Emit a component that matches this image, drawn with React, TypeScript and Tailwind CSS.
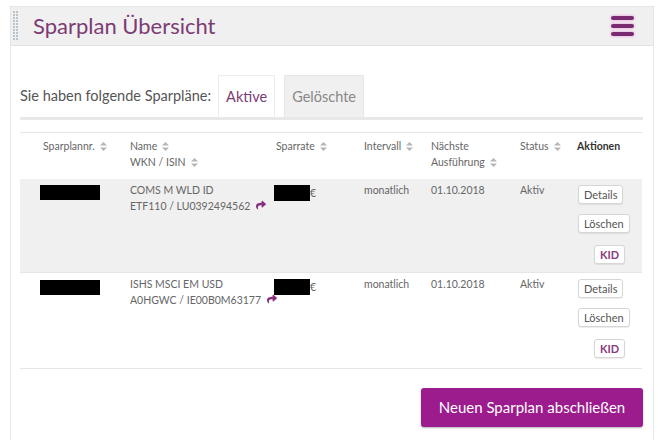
import React from 'react'
import { FaShare } from 'react-icons/fa'

const SortIcon = () => (
  <svg width="7" height="9" viewBox="0 0 7 9" className="ml-[5px] inline-block align-[-1px]">
    <path d="M3.5 0 L7 3.5 H0 Z" fill="#b5b5b5" />
    <path d="M3.5 9 L7 5.5 H0 Z" fill="#b5b5b5" />
  </svg>
)

const Grip = () => (
  <svg width="6" height="30" viewBox="0 0 6 30" className="shrink-0">
    <defs>
      <pattern id="grip" width="3" height="3" patternUnits="userSpaceOnUse">
        <rect x="0" y="0" width="2" height="2" fill="#b9c4cc" />
      </pattern>
    </defs>
    <rect width="6" height="30" fill="url(#grip)" />
  </svg>
)

const Redacted = ({ w }: { w: number }) => (
  <span className="inline-block h-[15px] bg-black align-middle" style={{ width: w }} />
)

const SmallButton = ({ label, purple, className = '' }: { label: string; purple?: boolean; className?: string }) => (
  <button
    className={`h-[19px] rounded-[3px] border border-[#d6d6d6] bg-white px-[5px] text-[11px] leading-none shadow-[0_1px_1px_rgba(0,0,0,0.08)] ${
      purple ? 'font-bold text-[#8a3a80]' : 'text-[#555]'
    } ${className}`}
  >
    {label}
  </button>
)

interface Plan {
  name: string
  ids: string
}

const plans: Plan[] = [
  { name: 'COMS M WLD ID', ids: 'ETF110 / LU0392494562' },
  { name: 'ISHS MSCI EM USD', ids: 'A0HGWC / IE00B0M63177' }
]

export default function App() {
  return (
    <div className="min-h-[440px] bg-white pt-[6px] pl-[10px] font-['Lato','Noto_Sans',sans-serif] text-[#555]">
      <div className="h-[440px] w-[644px] border border-b-0 border-[#e6e6e6]">
        <div className="flex h-[39px] items-center border-b border-[#e2e2e2] bg-[#f0f0f0] pl-[2px] pr-[19px]">
          <Grip />
          <h1 className="ml-[14px] text-[22px] leading-none text-[#7d3b74]">Sparplan Übersicht</h1>
          <div className="ml-auto flex flex-col gap-[4px]">
            <span className="block h-[4px] w-[23px] rounded-full bg-[#7a2a6e] shadow-[0_0_3px_rgba(220,80,200,0.6)]" />
            <span className="block h-[4px] w-[23px] rounded-full bg-[#7a2a6e] shadow-[0_0_3px_rgba(220,80,200,0.6)]" />
            <span className="block h-[4px] w-[23px] rounded-full bg-[#7a2a6e] shadow-[0_0_3px_rgba(220,80,200,0.6)]" />
          </div>
        </div>

        <div className="pl-[9px] pr-[10px] pt-[29px]">
          <div className="flex items-center border-b-[3px] border-[#e8e8e8] text-[14.5px]">
            <span className="mr-[7px]">Sie haben folgende Sparpläne:</span>
            <span className="flex h-[42px] w-[57px] items-center justify-center border border-b-0 border-[#ececec] bg-white text-[#7d3b74]">
              Aktive
            </span>
            <span className="ml-[9px] flex h-[42px] w-[80px] items-center justify-center border border-b-0 border-[#e6e6e6] bg-[#f0f0f0] text-[#888]">
              Gelöschte
            </span>
          </div>

          <table className="mt-[12px] w-[622px] table-fixed border-collapse text-[10.5px] leading-[16px] text-[#666]">
            <colgroup>
              <col className="w-[102px]" />
              <col className="w-[146px]" />
              <col className="w-[88px]" />
              <col className="w-[67px]" />
              <col className="w-[89px]" />
              <col className="w-[57px]" />
              <col className="w-[73px]" />
            </colgroup>
            <thead>
              <tr className="h-[46px] border-t border-[#e6e6e6] align-top">
                <th className="whitespace-nowrap pl-[23px] pt-[5px] text-left font-normal">
                  Sparplannr.<SortIcon />
                </th>
                <th className="whitespace-nowrap pl-[8px] pt-[5px] text-left font-normal">
                  Name<SortIcon />
                  <br />
                  WKN / ISIN<SortIcon />
                </th>
                <th className="whitespace-nowrap pl-[8px] pt-[5px] text-left font-normal">
                  Sparrate<SortIcon />
                </th>
                <th className="whitespace-nowrap pl-[8px] pt-[5px] text-left font-normal">
                  Intervall<SortIcon />
                </th>
                <th className="whitespace-nowrap pl-[8px] pt-[5px] text-left font-normal">
                  Nächste
                  <br />
                  Ausführung<SortIcon />
                </th>
                <th className="whitespace-nowrap pl-[8px] pt-[5px] text-left font-normal">
                  Status<SortIcon />
                </th>
                <th className="pl-[8px] pt-[5px] text-left font-bold text-[#333]">Aktionen</th>
              </tr>
            </thead>
            <tbody>
              {plans.map((p, i) => (
                <tr
                  key={p.ids}
                  className={`border-b border-[#e6e6e6] align-top ${i === 0 ? 'h-[94px] bg-[#f0f0f0]' : 'h-[96px] bg-white'}`}
                >
                  <td className="pl-[20px] pt-[5px]">
                    <Redacted w={60} />
                  </td>
                  <td className="whitespace-nowrap pl-[8px] pt-[3px]">
                    {p.name}
                    <br />
                    {p.ids}
                    <FaShare className="ml-[6px] inline-block align-[0px] text-[#8a2f80]" size={10} />
                  </td>
                  <td className="whitespace-nowrap pl-[6px] pt-[5px]">
                    <span className="inline-block h-[16px] w-[36px] bg-black align-middle" />
                    <span className="align-middle">€</span>
                  </td>
                  <td className="pl-[8px] pt-[3px]">monatlich</td>
                  <td className="pl-[8px] pt-[3px]">01.10.2018</td>
                  <td className="pl-[8px] pt-[3px]">Aktiv</td>
                  <td className="pl-[9px] pt-[6px]">
                    <div className="flex flex-col items-start gap-[10px] pb-[8px]">
                      <SmallButton label="Details" />
                      <SmallButton label="Löschen" />
                      <SmallButton label="KID" purple className="ml-[16px] mt-[2px]" />
                    </div>
                  </td>
                </tr>
              ))}
            </tbody>
          </table>

          <div className="mt-[19px] flex justify-end">
            <button className="h-[39px] w-[222px] rounded-[3px] bg-[#9c1b8d] text-[15px] text-white shadow-[0_1px_2px_rgba(0,0,0,0.3)]">
              Neuen Sparplan abschließen
            </button>
          </div>
        </div>
      </div>
    </div>
  )
}
